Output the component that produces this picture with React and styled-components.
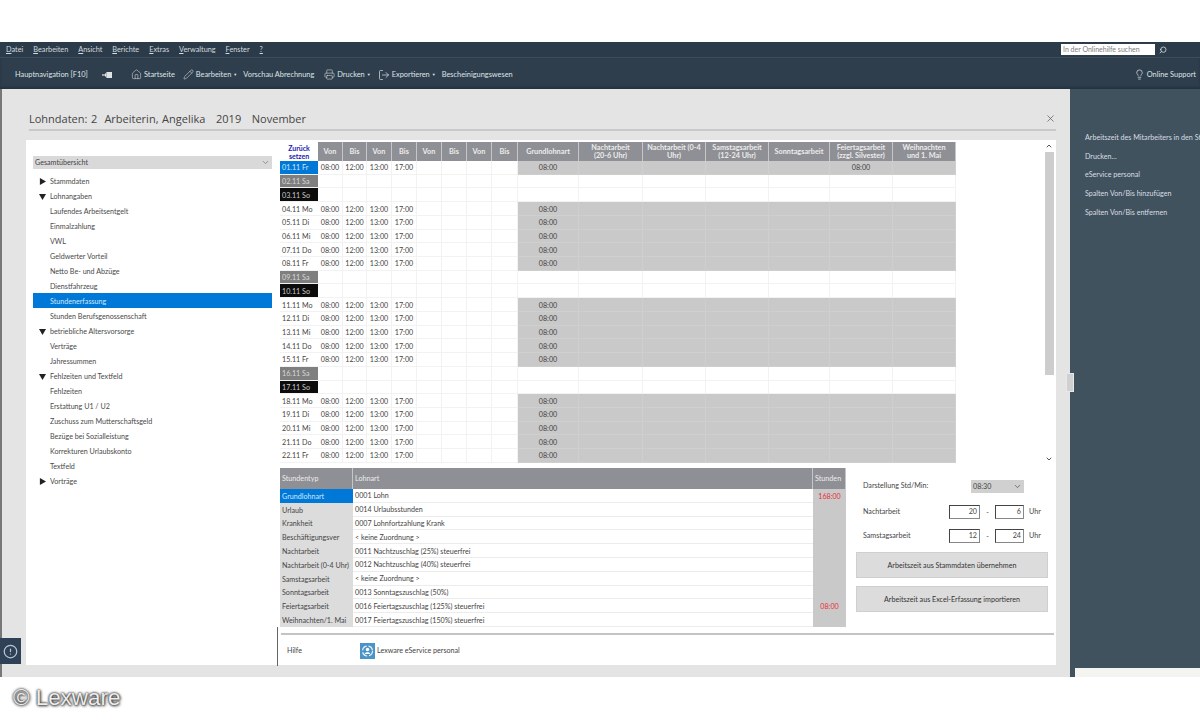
import styled, {createGlobalStyle} from 'styled-components'
import {House, Pencil, Printer, LogOut, Lightbulb, Search, X, ChevronDown, ChevronUp, CircleAlert} from 'lucide-react'

const GlobalStyle = createGlobalStyle`
    html, body {
        margin: 0;
        padding: 0;
        background: #fff;
    }
    body {
        font-family: Lato, Roboto, "Liberation Sans", sans-serif;
        font-size: 7.15px;
        color: #333;
    }
`

const Page = styled.div`
    width: 1200px;
    height: 720px;
    overflow: hidden;
    display: flex;
    flex-direction: column;
    padding-top: 42px;
    box-sizing: border-box;
`

const MenuBar = styled.div`
    height: 16px;
    flex: none;
    background: #2b3b4a;
    border-bottom: 1px solid #3c4c5a;
    box-sizing: border-box;
    display: flex;
    align-items: center;
    color: #d5dade;
    font-size: 7.3px;
    padding-left: 6px;
    gap: 10px;
`

const MenuEntry = styled.span`
    line-height: 15px;
`

const SearchBox = styled.div`
    margin-left: auto;
    width: 139px;
    height: 15px;
    display: flex;
    align-items: center;
    gap: 4px;
    svg {
        color: #d5dade;
    }
`

const SearchField = styled.div`
    width: 94px;
    height: 11px;
    background: #fff;
    color: #7d7d7d;
    font-size: 7px;
    line-height: 11px;
    padding-left: 2px;
    box-sizing: border-box;
`

const ToolBar = styled.div`
    height: 31px;
    flex: none;
    background: #2e3e4d;
    display: flex;
    align-items: center;
    color: #dfe3e6;
    font-size: 7.4px;
    padding: 2px 0 0 15px;
    box-sizing: border-box;
    box-shadow: inset 0 -2px 2px #26333f;
`

const ToolItem = styled.div`
    display: flex;
    align-items: center;
    gap: 2px;
    margin-left: ${(props) => props.$left || 0}px;
    white-space: nowrap;
    svg {
        flex: none;
    }
`

const SupportItem = styled(ToolItem)`
    margin-left: auto;
    margin-right: 4px;
`

const Caret = styled.span`
    font-size: 4px;
`

const Body = styled.div`
    height: 588px;
    flex: none;
    display: flex;
`

const Main = styled.div`
    width: 1070px;
    flex: none;
    background: #e4e4e4;
    border-left: 2px solid #777;
    box-sizing: border-box;
    display: flex;
    flex-direction: column;
    position: relative;
`

const TitleBar = styled.div`
    margin: 0 14px 0 27px;
    height: 42px;
    flex: none;
    border-bottom: 2px solid #c9c9c9;
    display: flex;
    align-items: flex-end;
    justify-content: space-between;
    box-sizing: border-box;
    color: #444;
    font-family: "Open Sans", sans-serif;
    font-size: 11px;
    line-height: 14px;
    padding-bottom: 3px;
    word-spacing: 0.7px;
    svg {
        color: #555;
        margin-bottom: 2px;
    }
`

const Content = styled.div`
    margin: 9px 14px 12px 24px;
    height: 525px;
    flex: none;
    background: #fff;
    display: flex;
`

const TreeColumn = styled.div`
    width: 251px;
    flex: none;
    padding: 16px 5px 0 7px;
    box-sizing: border-box;
`

const TreeSelect = styled.div`
    height: 13px;
    background: #d9d9d9;
    display: flex;
    align-items: center;
    justify-content: space-between;
    padding: 0 2px;
    line-height: 13px;
    margin-bottom: 4px;
    color: #444;
    svg {
        color: #777;
    }
`

const TreeRow = styled.div`
    height: 15px;
    line-height: 15px;
    display: flex;
    align-items: center;
    padding: 1px 0 0 ${(props) => (props.$head ? 6 : 17)}px;
    box-sizing: border-box;
    gap: 4px;
    background: ${(props) => (props.$selected ? '#0078d7' : 'transparent')};
    color: ${(props) => (props.$selected ? '#cfe8fb' : '#4a4a4a')};
`

const TreeArrow = styled.svg`
    width: 7px;
    height: 7px;
    fill: #222;
    flex: none;
`

const RightColumn = styled.div`
    flex: 1;
    min-width: 0;
    display: flex;
    flex-direction: column;
`

const TableArea = styled.div`
    height: 321px;
    flex: none;
    margin: 2px 2px 0 3px;
    display: flex;
    justify-content: space-between;
`

const DayGrid = styled.div`
    display: grid;
    grid-template-columns: 38px 25px 24px 25px 25px 25px 25px 25px 26px 61px 64px 63px 63px 61px 63px 63px;
    grid-template-rows: 19px;
    grid-auto-rows: 13.72px;
    width: 676px;
    height: 321px;
    overflow: hidden;
`

const HeadCell = styled.div`
    background: #8f9095;
    color: #ececec;
    border-right: 1px solid #c5c6c9;
    font-size: 7.3px;
    font-weight: 700;
    line-height: 7.5px;
    display: flex;
    align-items: center;
    justify-content: center;
    text-align: center;
    box-sizing: border-box;
`

const ResetCell = styled.div`
    color: #2020b0;
    font-size: 7px;
    font-weight: 700;
    line-height: 8px;
    text-align: center;
    display: flex;
    align-items: center;
    justify-content: center;
`

const dateColors = {
    active: ['#0078d7', '#cfe8fb'],
    sat: ['#7f7f7f', '#d8d8d8'],
    sun: ['#0c0c0c', '#c8c8c8'],
    work: ['#fff', '#444'],
}

const DateCell = styled.div`
    background: ${(props) => dateColors[props.$kind][0]};
    color: ${(props) => dateColors[props.$kind][1]};
    border-bottom: 1px solid #f2f2f2;
    padding: 1px 0 0 2px;
    display: flex;
    align-items: center;
    white-space: nowrap;
    box-sizing: border-box;
`

const TimeCell = styled.div`
    background: ${(props) => (props.$shaded ? '#c9c9c9' : '#fff')};
    border-right: 1px solid ${(props) => (props.$shaded ? '#cfcfcf' : '#f2f2f2')};
    border-bottom: 1px solid ${(props) => (props.$shaded ? '#cfcfcf' : '#f2f2f2')};
    color: #444;
    padding-top: 1px;
    display: flex;
    align-items: center;
    justify-content: center;
    box-sizing: border-box;
`

const ScrollTrack = styled.div`
    width: 10px;
    height: 321px;
    display: flex;
    flex-direction: column;
    align-items: center;
    color: #555;
`

const ScrollThumb = styled.div`
    width: 9px;
    height: 223px;
    margin-top: 2px;
    margin-bottom: auto;
    background: #cdcdcd;
`

const LowerArea = styled.div`
    height: 159px;
    flex: none;
    margin: 5px 0 0 3px;
    display: flex;
`

const WageTable = styled.div`
    width: 566px;
    flex: none;
    display: grid;
    grid-template-columns: 73px 460px 33px;
    grid-template-rows: 21px repeat(10, 13.8px);
`

const WageHead = styled.div`
    background: #8f9095;
    color: #ececec;
    border-right: 1px solid #c5c6c9;
    font-size: 7.2px;
    display: flex;
    align-items: center;
    padding-left: 2px;
    box-sizing: border-box;
`

const WageType = styled.div`
    background: ${(props) => (props.$selected ? '#0078d7' : '#dcdcdc')};
    color: ${(props) => (props.$selected ? '#cfe8fb' : '#444')};
    padding: 1px 0 0 2px;
    box-sizing: border-box;
    display: flex;
    align-items: center;
    white-space: nowrap;
    overflow: hidden;
`

const WageName = styled.div`
    border-bottom: 1px solid #ececec;
    padding: 1px 0 0 2px;
    display: flex;
    align-items: center;
    color: #444;
    box-sizing: border-box;
`

const WageHours = styled.div`
    background: #c9c9c9;
    color: #e8303a;
    padding-top: 1px;
    box-sizing: border-box;
    display: flex;
    align-items: center;
    justify-content: center;
`

const Settings = styled.div`
    width: 192px;
    margin-left: 10px;
    padding-top: 11px;
    display: flex;
    flex-direction: column;
`

const FieldRow = styled.div`
    height: 14px;
    padding-left: 7px;
    margin-bottom: ${(props) => props.$gap}px;
    display: flex;
    align-items: center;
    color: #444;
`

const FieldLabel = styled.span`
    width: ${(props) => props.$width}px;
    flex: none;
    margin-top: -2px;
`

const UnitSelect = styled.div`
    width: 53px;
    height: 13px;
    background: #d0d0d0;
    display: flex;
    align-items: center;
    justify-content: space-between;
    padding: 0 2px;
    box-sizing: border-box;
    svg {
        color: #555;
    }
`

const NumberField = styled.div`
    width: ${(props) => props.$width}px;
    height: 14px;
    border: 1px solid #888;
    border-top-color: #444;
    border-left-color: #444;
    box-sizing: border-box;
    text-align: right;
    line-height: 12px;
    padding-right: 2px;
`

const Dash = styled.span`
    width: 15px;
    text-align: center;
`

const Unit = styled.span`
    margin: -2px 0 0 5px;
`

const ActionButton = styled.div`
    height: 26px;
    margin-bottom: 8px;
    background: #dcdcdc;
    border: 1px solid #cfcfcf;
    box-sizing: border-box;
    display: flex;
    align-items: center;
    justify-content: center;
    color: #333;
`

const HelpBar = styled.div`
    flex: 1;
    border-left: 1px solid #666;
    padding: 6px 2px 0 3px;
`

const HelpInner = styled.div`
    border-top: 2px solid #c4c4c4;
    height: 31px;
    display: flex;
    align-items: center;
    padding-left: 6px;
`

const HelpLabel = styled.span`
    width: 73px;
    color: #444;
`

const ServiceLink = styled.div`
    display: flex;
    align-items: center;
    gap: 2px;
    color: #444;
`

const AlertButton = styled.div`
    position: absolute;
    left: -2px;
    top: 549px;
    width: 21px;
    height: 26px;
    background: #2e4156;
    color: #b9c7d2;
    display: flex;
    align-items: center;
    justify-content: center;
`

const SidePanel = styled.div`
    flex: 1;
    min-width: 0;
    background: #41525f;
    color: #d8dee2;
    display: flex;
    flex-direction: column;
    padding-top: 40px;
    position: relative;
`

const SideLink = styled.div`
    height: 18.7px;
    line-height: 18.7px;
    padding-left: 15px;
    white-space: nowrap;
    overflow: hidden;
`

const SideFoot = styled.div`
    margin-top: auto;
    margin-left: 5px;
    height: 9px;
    background: #f4f5f0;
`

const SplitHandle = styled.div`
    position: absolute;
    left: -4px;
    top: 284px;
    width: 8px;
    height: 19px;
    background: #cfd0d1;
    border: 1px solid #e8e8e8;
    box-sizing: border-box;
`

const Credit = styled.div`
    padding: 9px 0 0 13px;
    font-family: "Liberation Sans", Arial, sans-serif;
    font-size: 22.4px;
    line-height: 24px;
    color: #ececec;
    text-shadow: 0 0 2px #333, 0 0 3px #444, 1px 1px 3px #555;
`

const menu = [['D', 'atei'], ['B', 'earbeiten'], ['A', 'nsicht'], ['B', 'erichte'], ['E', 'xtras'], ['V', 'erwaltung'], ['F', 'enster'], ['?', '']]

const dayNames = ['Fr', 'Sa', 'So', 'Mo', 'Di', 'Mi', 'Do']
const days = Array.from({length: 22}, (_, i) => {
    const name = dayNames[i % 7]
    const kind = i === 0 ? 'active' : name === 'Sa' ? 'sat' : name === 'So' ? 'sun' : 'work'
    return {label: `${String(i + 1).padStart(2, '0')}.11 ${name}`, kind}
})

const slotHeads = ['Von', 'Bis', 'Von', 'Bis', 'Von', 'Bis', 'Von', 'Bis']
const wageHeads = [
    ['Grundlohnart'],
    ['Nachtarbeit', '(20-6 Uhr)'],
    ['Nachtarbeit (0-4', 'Uhr)'],
    ['Samstagsarbeit', '(12-24 Uhr)'],
    ['Sonntagsarbeit'],
    ['Feiertagsarbeit', '(zzgl. Silvester)'],
    ['Weihnachten', 'und 1. Mai'],
]
const shifts = ['08:00', '12:00', '13:00', '17:00', '', '', '', '']

const tree = [
    {label: 'Stammdaten', head: 'closed'},
    {label: 'Lohnangaben', head: 'open'},
    {label: 'Laufendes Arbeitsentgelt'},
    {label: 'Einmalzahlung'},
    {label: 'VWL'},
    {label: 'Geldwerter Vorteil'},
    {label: 'Netto Be- und Abzüge'},
    {label: 'Dienstfahrzeug'},
    {label: 'Stundenerfassung', selected: true},
    {label: 'Stunden Berufsgenossenschaft'},
    {label: 'betriebliche Altersvorsorge', head: 'open'},
    {label: 'Verträge'},
    {label: 'Jahressummen'},
    {label: 'Fehlzeiten und Textfeld', head: 'open'},
    {label: 'Fehlzeiten'},
    {label: 'Erstattung U1 / U2'},
    {label: 'Zuschuss zum Mutterschaftsgeld'},
    {label: 'Bezüge bei Sozialleistung'},
    {label: 'Korrekturen Urlaubskonto'},
    {label: 'Textfeld'},
    {label: 'Vorträge', head: 'closed'},
]

const wages = [
    ['Grundlohnart', '0001 Lohn', '168:00'],
    ['Urlaub', '0014 Urlaubsstunden', ''],
    ['Krankheit', '0007 Lohnfortzahlung Krank', ''],
    ['Beschäftigungsver', '< keine Zuordnung >', ''],
    ['Nachtarbeit', '0011 Nachtzuschlag (25%) steuerfrei', ''],
    ['Nachtarbeit (0-4 Uhr)', '0012 Nachtzuschlag (40%) steuerfrei', ''],
    ['Samstagsarbeit', '< keine Zuordnung >', ''],
    ['Sonntagsarbeit', '0013 Sonntagszuschlag (50%)', ''],
    ['Feiertagsarbeit', '0016 Feiertagszuschlag (125%) steuerfrei', '08:00'],
    ['Weihnachten/1. Mai', '0017 Feiertagszuschlag (150%) steuerfrei', ''],
]

const sideLinks = ['Arbeitszeit des Mitarbeiters in den Stammdaten', 'Drucken...', 'eService personal', 'Spalten Von/Bis hinzufügen', 'Spalten Von/Bis entfernen']

const PinIcon = () => (
    <svg width="11" height="8" viewBox="0 0 11 8" fill="currentColor">
        <rect x="0" y="3.4" width="3" height="1.2" />
        <rect x="3" y="2.4" width="1.4" height="3.2" />
        <rect x="4.4" y="1" width="5.6" height="6" />
    </svg>
)

const ServiceIcon = () => (
    <svg width="15" height="16" viewBox="0 0 15 16">
        <rect width="15" height="16" fill="#4c93c8" />
        <circle cx="7.5" cy="8" r="5" fill="none" stroke="#e6f1f8" strokeWidth="1.2" strokeDasharray="6 2" />
        <circle cx="7.5" cy="6.5" r="1.7" fill="#fff" />
        <path d="M4.7 11 C5 8.8 10 8.8 10.3 11 Z" fill="#fff" />
    </svg>
)

const Arrow = ({open}) => (
    <TreeArrow viewBox="0 0 8 8">
        <path d={open ? 'M0 1 H8 L4 8 Z' : 'M1 0 L8 4 L1 8 Z'} />
    </TreeArrow>
)

const App = () => {
    return (
        <Page>
            <GlobalStyle />
            <MenuBar>
                {menu.map(([first, rest], i) => (
                    <MenuEntry key={i}><u>{first}</u>{rest}</MenuEntry>
                ))}
                <SearchBox>
                    <SearchField>In der Onlinehilfe suchen</SearchField>
                    <Search size={8} strokeWidth={2.5} style={{transform: 'scaleX(-1)'}} />
                </SearchBox>
            </MenuBar>

            <ToolBar>
                <ToolItem>Hauptnavigation [F10]</ToolItem>
                <ToolItem $left={14}><PinIcon /></ToolItem>
                <ToolItem $left={18}><House size={11} strokeWidth={1.2} />Startseite</ToolItem>
                <ToolItem $left={8}><Pencil size={11} strokeWidth={1.2} />Bearbeiten<Caret>▼</Caret></ToolItem>
                <ToolItem $left={6}>Vorschau Abrechnung</ToolItem>
                <ToolItem $left={10}><Printer size={11} strokeWidth={1.2} />Drucken<Caret>▼</Caret></ToolItem>
                <ToolItem $left={7}><LogOut size={12} strokeWidth={1.4} />Exportieren<Caret>▼</Caret></ToolItem>
                <ToolItem $left={6}>Bescheinigungswesen</ToolItem>
                <SupportItem>
                    <Lightbulb size={11} strokeWidth={1.6} />Online Support
                </SupportItem>
            </ToolBar>

            <Body>
                <Main>
                    <TitleBar>
                        <span>Lohndaten: 2 &nbsp;Arbeiterin, Angelika &nbsp;&nbsp;2019 &nbsp;&nbsp;November</span>
                        <X size={11} strokeWidth={1.5} />
                    </TitleBar>

                    <Content>
                        <TreeColumn>
                            <TreeSelect>
                                Gesamtübersicht
                                <ChevronDown size={9} />
                            </TreeSelect>
                            {tree.map((item) => (
                                <TreeRow key={item.label} $head={!!item.head} $selected={item.selected}>
                                    {item.head && <Arrow open={item.head === 'open'} />}
                                    {item.label}
                                </TreeRow>
                            ))}
                        </TreeColumn>

                        <RightColumn>
                            <TableArea>
                                <DayGrid>
                                    <ResetCell>Zurück<br />setzen</ResetCell>
                                    {slotHeads.map((head, i) => <HeadCell key={i}>{head}</HeadCell>)}
                                    {wageHeads.map((lines) => (
                                        <HeadCell key={lines[0] + lines.length}>
                                            <span>{lines[0]}{lines[1] && <br />}{lines[1]}</span>
                                        </HeadCell>
                                    ))}
                                    {days.map((day) => {
                                        const off = day.kind === 'sat' || day.kind === 'sun'
                                        return [
                                            <DateCell key={day.label} $kind={day.kind}>{day.label}</DateCell>,
                                            ...shifts.map((time, i) => (
                                                <TimeCell key={day.label + 's' + i}>{off ? '' : time}</TimeCell>
                                            )),
                                            ...wageHeads.map((_, i) => (
                                                <TimeCell key={day.label + 'w' + i} $shaded={!off}>
                                                    {!off && (i === 0 || (i === 5 && day.kind === 'active')) ? '08:00' : ''}
                                                </TimeCell>
                                            )),
                                        ]
                                    })}
                                </DayGrid>
                                <ScrollTrack>
                                    <ChevronUp size={8} strokeWidth={3} />
                                    <ScrollThumb />
                                    <ChevronDown size={8} strokeWidth={3} />
                                </ScrollTrack>
                            </TableArea>

                            <LowerArea>
                                <WageTable>
                                    <WageHead>Stundentyp</WageHead>
                                    <WageHead>Lohnart</WageHead>
                                    <WageHead>Stunden</WageHead>
                                    {wages.map(([type, name, hours], i) => [
                                        <WageType key={type} $selected={i === 0}>{type}</WageType>,
                                        <WageName key={type + 'n'}>{name}</WageName>,
                                        <WageHours key={type + 'h'}>{hours}</WageHours>,
                                    ])}
                                </WageTable>

                                <Settings>
                                    <FieldRow $gap={12}>
                                        <FieldLabel $width={108}>Darstellung Std/Min:</FieldLabel>
                                        <UnitSelect>08:30<ChevronDown size={9} /></UnitSelect>
                                    </FieldRow>
                                    <FieldRow $gap={10}>
                                        <FieldLabel $width={86}>Nachtarbeit</FieldLabel>
                                        <NumberField $width={31}>20</NumberField>
                                        <Dash>-</Dash>
                                        <NumberField $width={29}>6</NumberField>
                                        <Unit>Uhr</Unit>
                                    </FieldRow>
                                    <FieldRow $gap={9}>
                                        <FieldLabel $width={86}>Samstagsarbeit</FieldLabel>
                                        <NumberField $width={31}>12</NumberField>
                                        <Dash>-</Dash>
                                        <NumberField $width={29}>24</NumberField>
                                        <Unit>Uhr</Unit>
                                    </FieldRow>
                                    <ActionButton>Arbeitszeit aus Stammdaten übernehmen</ActionButton>
                                    <ActionButton>Arbeitszeit aus Excel-Erfassung importieren</ActionButton>
                                </Settings>
                            </LowerArea>

                            <HelpBar>
                                <HelpInner>
                                    <HelpLabel>Hilfe</HelpLabel>
                                    <ServiceLink><ServiceIcon />Lexware eService personal</ServiceLink>
                                </HelpInner>
                            </HelpBar>
                        </RightColumn>
                    </Content>

                    <AlertButton><CircleAlert size={15} strokeWidth={2} /></AlertButton>
                </Main>

                <SidePanel>
                    <SplitHandle />
                    {sideLinks.map((link) => <SideLink key={link}>{link}</SideLink>)}
                    <SideFoot />
                </SidePanel>
            </Body>

            <Credit>© Lexware</Credit>
        </Page>
    )
}

export default App
